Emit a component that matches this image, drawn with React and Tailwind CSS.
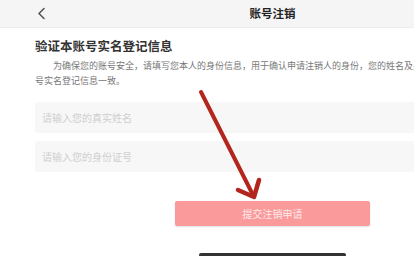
import React from "react";

export default function App() {
  const font = { fontFamily: '"Noto Sans CJK SC", "Noto Sans", sans-serif' };
  return (
    <div className="relative w-[414px] h-[256px] overflow-hidden bg-white" style={font}>
      <div className="w-[545px] flex flex-col">
        <div className="grid grid-cols-[1fr_auto_1fr] items-center h-[28px] bg-[#f5f5f5] border-b border-[#ececec]">
          <div className="pl-[37px] flex items-center">
            <svg width="9" height="13" viewBox="0 0 9 13" fill="none">
              <path d="M7 1.5L2 6.5L7 11.5" stroke="#555" strokeWidth="1.6" strokeLinecap="round" strokeLinejoin="round" />
            </svg>
          </div>
          <div className="text-[11.5px] font-semibold text-[#222] leading-none">账号注销</div>
          <div />
        </div>
        <div className="px-[35px] flex flex-col">
          <div className="mt-[10px] text-[12.5px] leading-[16px] font-bold text-[#333] whitespace-nowrap">验证本账号实名登记信息</div>
          <div className="mt-[5px] text-[9px] leading-[14.5px] text-[#777] whitespace-nowrap">
            <div className="pl-[18px]">为确保您的账号安全，请填写您本人的身份信息，用于确认申请注销人的身份，您的姓名及身份证号需与账</div>
            <div>号实名登记信息一致。</div>
          </div>
          <div className="mt-[14px] flex flex-col gap-[8px]">
            <div className="h-[31px] rounded-[3px] bg-[#f7f7f7] flex items-center pl-[7px] text-[10px] text-[#cfcfcf]">请输入您的真实姓名</div>
            <div className="h-[31px] rounded-[3px] bg-[#f7f7f7] flex items-center pl-[7px] text-[10px] text-[#cfcfcf]">请输入您的身份证号</div>
          </div>
          <div className="mt-[29px] mx-auto w-[195px] h-[25px] rounded-[2px] bg-[#fa9a9b] shadow-[0_1px_2px_rgba(0,0,0,0.12)] flex items-center justify-center text-[10px] text-[#fdeaea]">提交注销申请</div>
          <div className="mt-[27px] mx-auto w-[147px] h-[4px] rounded-full bg-[#333]" />
        </div>
      </div>
      <svg className="absolute left-0 top-0 pointer-events-none" width="414" height="256" viewBox="0 0 414 256">
        <line x1="201" y1="92" x2="253" y2="195" stroke="#b3261e" strokeWidth="4" strokeLinecap="round" />
        <polyline points="238,190 254,197 259,180" fill="none" stroke="#b3261e" strokeWidth="4.5" strokeLinecap="round" strokeLinejoin="round" />
      </svg>
    </div>
  );
}
